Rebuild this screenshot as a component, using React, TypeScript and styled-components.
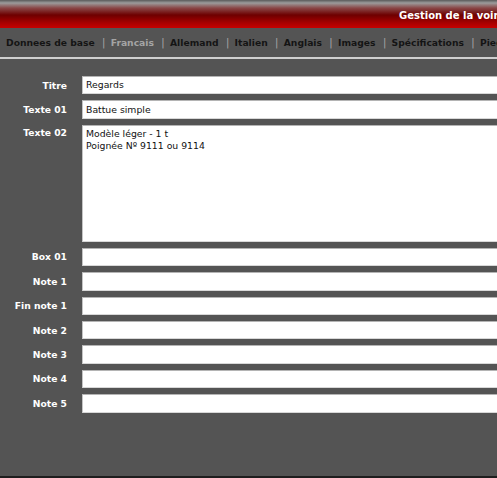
import * as React from "react"
import styled, { createGlobalStyle } from "styled-components"

const GlobalStyle = createGlobalStyle`
  html, body {
    margin: 0;
    padding: 0;
    background: #545454;
    overflow: hidden;
  }
  body {
    font-family: "DejaVu Sans", Verdana, sans-serif;
  }
`

const Page = styled.div`
  width: 100vw;
  height: 478px;
  overflow: hidden;
  display: flex;
  flex-direction: column;
  background: #545454;
  border-bottom: 2px solid #1e1e1e;
  box-sizing: border-box;
`

const Header = styled.div`
  height: 28px;
  flex: none;
  display: flex;
  align-items: center;
  padding-left: 399px;
  white-space: nowrap;
  background: linear-gradient(
    to bottom,
    #5a5a5a 0px,
    #9c9c9c 3px,
    #8a4848 8px,
    #6e0000 15px,
    #a80000 23px,
    #c60000 28px
  );
`

const Title = styled.span`
  color: #fff;
  font-weight: bold;
  font-size: 10px;
  padding-top: 2px;
`

const Nav = styled.nav`
  height: 29px;
  flex: none;
  display: flex;
  align-items: center;
  padding-left: 6px;
  white-space: nowrap;
  border-bottom: 2px solid #cfcfcf;
`

const NavItem = styled.span<{ $active?: boolean }>`
  font-size: 9.2px;
  font-weight: bold;
  color: ${(p) => (p.$active ? "#a4a4a4" : "#141414")};
`

const Sep = styled.span`
  font-size: 10px;
  color: #a8a8a8;
  margin: 0 5.3px 0 7.4px;
`

const Form = styled.div`
  flex: 1;
  width: 600px;
  padding-top: 17px;
  display: flex;
  flex-direction: column;
  gap: 6px;
`

const Row = styled.div<{ $tall?: boolean }>`
  display: flex;
  align-items: ${(p) => (p.$tall ? "flex-start" : "center")};
`

const Label = styled.label<{ $tall?: boolean }>`
  width: 67px;
  margin-right: 15px;
  flex: none;
  text-align: right;
  color: #fff;
  font-size: 9.2px;
  font-weight: bold;
  white-space: nowrap;
  padding-top: ${(p) => (p.$tall ? "2px" : "0")};
`

const Field = styled.div<{ $tall?: boolean }>`
  flex: 1;
  height: ${(p) => (p.$tall ? "117px" : "18.4px")};
  box-sizing: border-box;
  background: #fff;
  border-top: 1px solid #b4b4b4;
  border-left: 1px solid #c4c4c4;
  border-bottom: 1px solid #d8d8d8;
  padding: ${(p) => (p.$tall ? "2px 3px" : "0 3px")};
  display: flex;
  flex-direction: column;
  justify-content: ${(p) => (p.$tall ? "flex-start" : "center")};
  font-size: 9.3px;
  line-height: 12px;
  color: #111;
  white-space: nowrap;
`

const fields: { label: string; value?: string[]; tall?: boolean }[] = [
  { label: "Titre", value: ["Regards"] },
  { label: "Texte 01", value: ["Battue simple"] },
  { label: "Texte 02", value: ["Modèle léger - 1 t", "Poignée Nº 9111 ou 9114"], tall: true },
  { label: "Box 01" },
  { label: "Note 1" },
  { label: "Fin note 1" },
  { label: "Note 2" },
  { label: "Note 3" },
  { label: "Note 4" },
  { label: "Note 5" },
]

const tabs = [
  "Donnees de base",
  "Francais",
  "Allemand",
  "Italien",
  "Anglais",
  "Images",
  "Spécifications",
  "Pied de page",
]

const App: React.FC = () => {
  return (
    <>
      <GlobalStyle />
      <Page>
        <Header>
          <Title>Gestion de la voirie</Title>
        </Header>
        <Nav>
          {tabs.map((t, i) => (
            <React.Fragment key={t}>
              {i > 0 && <Sep>|</Sep>}
              <NavItem $active={t === "Francais"}>{t}</NavItem>
            </React.Fragment>
          ))}
        </Nav>
        <Form>
          {fields.map((f) => (
            <Row key={f.label} $tall={f.tall}>
              <Label $tall={f.tall}>{f.label}</Label>
              <Field $tall={f.tall}>
                {(f.value || []).map((line) => (
                  <div key={line}>{line}</div>
                ))}
              </Field>
            </Row>
          ))}
        </Form>
      </Page>
    </>
  )
}

export default App
